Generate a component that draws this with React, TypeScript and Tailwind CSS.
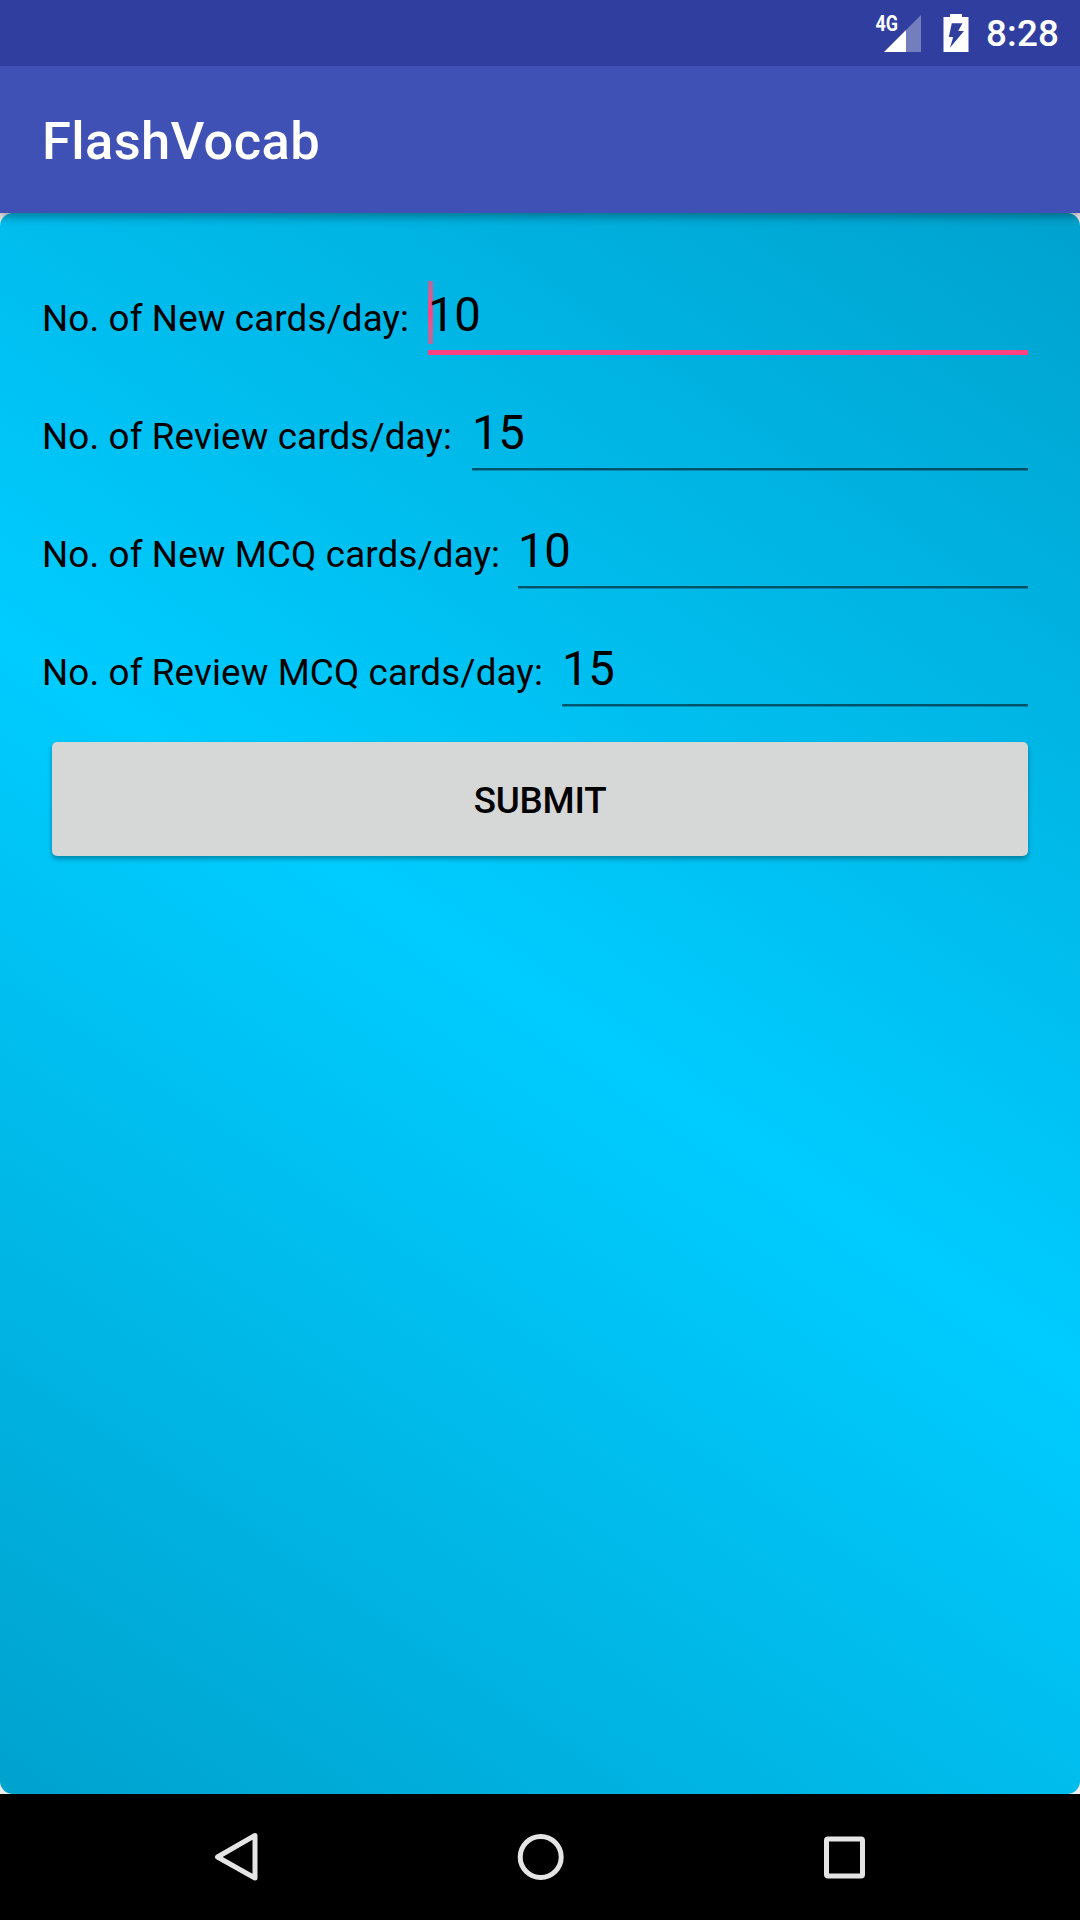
type FieldProps = { label: string; value: string; labelWidth: string; focused?: boolean };

function Field({ label, value, labelWidth, focused }: FieldProps) {
  return (
    <div className="flex h-[118px] w-full pr-[10px]">
      <label className={`shrink-0 whitespace-nowrap pt-[43px] text-[36.75px] leading-[42px] tracking-[0.14px] ${labelWidth}`}>{label}</label>
      <div className="relative h-[101px] flex-1">
        <div className="pt-8 text-[47.25px] leading-[56px] tracking-[-0.2px]">{value}</div>
        {focused && (
          <div className="absolute top-[26px] left-0 h-[63px] w-[5px] bg-linear-to-b from-[#b06ba0] via-[#ff4081] to-[#b06ba0] -z-10" />
        )}
        {focused ? (
          <div className="absolute top-[95px] left-0 h-[5px] w-full bg-[#ff4081]" />
        ) : (
          <div className="absolute top-[95px] left-0 h-[3px] w-full border-b border-black/25 bg-black/55 bg-clip-padding" />
        )}
      </div>
    </div>
  );
}

function StatusBar() {
  return (
    <div className="relative z-20 flex h-[66px] items-center justify-end bg-[#303f9f] text-white">
      <svg width="50" height="66" viewBox="0 0 50 66" className="mr-[18px]">
        <text x="0.5" y="31.2" fontSize="22" fontWeight="700" fill="white" textLength="22.5" lengthAdjust="spacingAndGlyphs" fontFamily="Roboto, sans-serif">4G</text>
        <path d="M46 15V52H31V30Z" fill="white" fillOpacity=".33" />
        <path d="M31 30V52H9Z" fill="white" />
      </svg>
      <svg width="26" height="66" viewBox="0 0 26 66" className="mr-[17px]">
        <path fillRule="evenodd" fill="white" d="M7 14H19V17H25.5V52H.5V17H7ZM8.8 23.3L5.8 37H10.2L7 47.7L21 31H15.2L19.5 23.3Z" />
      </svg>
      <span className="mr-[21px] pt-0.5 text-[36.75px] leading-[64px] font-medium tracking-[0.15px]">8:28</span>
    </div>
  );
}

export default function App() {
  return (
    <div className="flex h-[1920px] w-[1080px] flex-col overflow-hidden bg-[#eeeeee] font-['Roboto',sans-serif] text-black">
      <StatusBar />
      <header className="relative z-10 flex h-[147px] items-center bg-[#3f51b5] pl-[42px] shadow-[0_3px_10px_rgba(0,0,0,0.4)]">
        <h1 className="pt-0.5 text-[52.5px] leading-[62px] font-medium tracking-[0.35px] text-white">FlashVocab</h1>
      </header>
      <main className="isolate h-[1581px] rounded-[13px] bg-[linear-gradient(214.34deg,#00a2ce_0%,#00ccff_50%,#00a2ce_100%)] px-[42px] pt-[42px]">
        <Field label="No. of New cards/day:" value="10" labelWidth="w-[386px]" focused />
        <Field label="No. of Review cards/day:" value="15" labelWidth="w-[430px]" />
        <Field label="No. of New MCQ cards/day:" value="10" labelWidth="w-[476px]" />
        <Field label="No. of Review MCQ cards/day:" value="15" labelWidth="w-[520px]" />
        <div className="px-[10px] pt-[15px]">
          <button className="h-[114px] w-full rounded-[5px] bg-[#d6d7d7] pt-[3px] text-[36.75px] font-medium tracking-[-0.2px] shadow-[0_3px_5px_rgba(0,0,0,0.32)]">
            SUBMIT
          </button>
        </div>
      </main>
      <nav className="flex h-[126px] items-center bg-black pl-[205px]">
        <svg width="670" height="126" viewBox="0 0 670 126" fill="none" stroke="#e5e5e5" strokeWidth="5" strokeLinejoin="round">
          <path d="M50 41.5V84L12.5 63Z" />
          <circle cx="335.7" cy="63" r="20.5" />
          <rect x="621.5" y="45" width="36" height="37" rx="1.5" />
        </svg>
      </nav>
    </div>
  );
}
